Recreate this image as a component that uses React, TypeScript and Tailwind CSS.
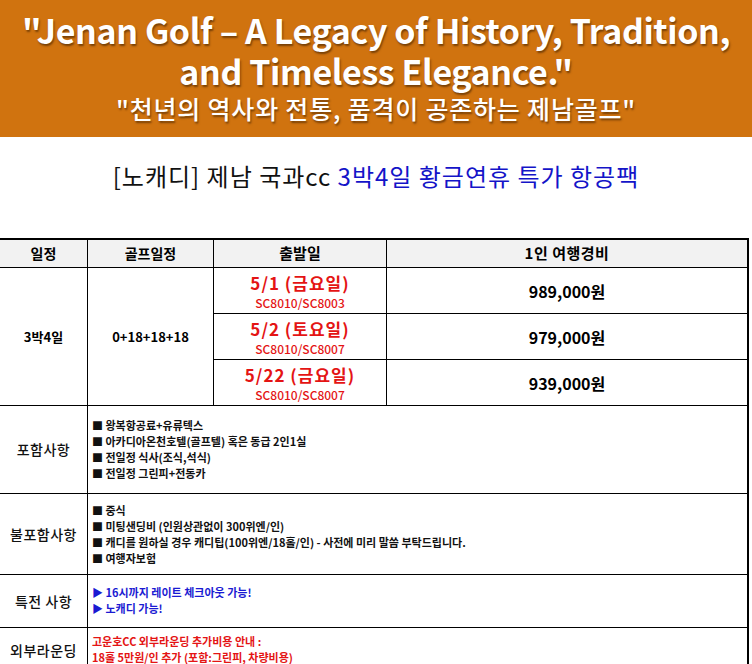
import React from 'react'

const KR = { fontFamily: '"Noto Sans CJK KR", "Noto Sans", sans-serif' }

const departures = [
  { date: '5/1 (금요일)', flight: 'SC8010/SC8003', price: '989,000원' },
  { date: '5/2 (토요일)', flight: 'SC8010/SC8007', price: '979,000원' },
  { date: '5/22 (금요일)', flight: 'SC8010/SC8007', price: '939,000원' },
]

const included = ['왕복항공료+유류텍스', '아카디아온천호텔(골프텔) 혹은 동급 2인1실', '전일정 식사(조식,석식)', '전일정 그린피+전동카']

const excluded = [
  '중식',
  '미팅샌딩비 (인원상관없이 300위엔/인)',
  '캐디를 원하실 경우 캐디팁(100위엔/18홀/인) - 사전에 미리 말씀 부탁드립니다.',
  '여행자보험',
]

const perks = ['16시까지 레이트 체크아웃 가능!', '노캐디 가능!']

function Label({ children }: { children: React.ReactNode }) {
  return (
    <div className="border-b border-r border-black flex items-center justify-center text-[14px] font-medium tracking-[0.5px] text-[#111]">
      {children}
    </div>
  )
}

export default function App() {
  return (
    <div className="w-[752px] h-[664px] overflow-hidden bg-white" style={KR}>
      {/* 배너 */}
      <div className="h-[137px] bg-[#d0730f] flex flex-col items-center text-white [text-shadow:1px_2px_2px_rgba(60,30,0,0.6)]">
        <div className="mt-[9px] text-[34px] leading-[41px] font-bold tracking-[-0.4px]">
          "Jenan Golf – A Legacy of History, Tradition,
        </div>
        <div className="text-[34px] leading-[41px] font-bold tracking-[-0.4px]">and Timeless Elegance."</div>
        <div className="text-[25px] leading-[34px] font-medium tracking-[0.8px]">"천년의 역사와 전통, 품격이 공존하는 제남골프"</div>
      </div>

      {/* 타이틀 */}
      <div className="h-[101px] pt-[22px] flex justify-center text-[24px] leading-[34px] tracking-[1px]">
        <span className="text-[#111]">[노캐디] 제남 국과cc&nbsp;</span>
        <span className="text-[#1414c8]">3박4일 황금연휴 특가 항공팩</span>
      </div>

      {/* 표 */}
      <div className="w-[749px] border-t-2 border-black grid grid-cols-[88px_126px_173px_362px] grid-rows-[28px_46px_46px_46px_88px_81px_53px_60px]">
        <div className="border-b border-r border-black bg-[#f2f2f2] flex items-center justify-center text-[14px] font-bold">일정</div>
        <div className="border-b border-r border-black bg-[#f2f2f2] flex items-center justify-center text-[14px] font-bold">골프일정</div>
        <div className="border-b border-r border-black bg-[#f2f2f2] flex items-center justify-center text-[15px] font-bold">출발일</div>
        <div className="border-b border-r-2 border-black bg-[#f2f2f2] flex items-center justify-center text-[15px] font-bold tracking-[0.5px]">1인 여행경비</div>

        <div className="row-span-3 border-b border-r border-black flex items-center justify-center text-[13px] font-bold">3박4일</div>
        <div className="row-span-3 border-b border-r border-black flex items-center justify-center text-[13px] font-bold">0+18+18+18</div>
        {departures.map((d, i) => (
          <React.Fragment key={i}>
            <div className="border-b border-r border-black flex flex-col items-center justify-center text-[#e41414] font-bold">
              <div className="text-[17px] leading-[23px] tracking-[1px]">{d.date}</div>
              <div className="text-[12px] leading-[17px] font-medium">{d.flight}</div>
            </div>
            <div className="border-b border-r-2 border-black flex items-center justify-center text-[16px] font-bold">{d.price}</div>
          </React.Fragment>
        ))}

        <Label>포함사항</Label>
        <div className="col-span-3 border-b border-r-2 border-black flex flex-col justify-center pl-[4px] pb-[2px] text-[11px] leading-[16px] font-bold text-[#111]">
          {included.map((t) => (
            <div key={t}>■ {t}</div>
          ))}
        </div>

        <Label>불포함사항</Label>
        <div className="col-span-3 border-b border-r-2 border-black flex flex-col justify-center pl-[4px] text-[11px] leading-[16px] font-bold text-[#111]">
          {excluded.map((t) => (
            <div key={t}>■ {t}</div>
          ))}
        </div>

        <Label>특전 사항</Label>
        <div className="col-span-3 border-b border-r-2 border-black flex flex-col justify-center pl-[4px] pb-[2px] text-[11px] leading-[16px] font-bold text-[#1a1ad2]">
          {perks.map((t) => (
            <div key={t}>▶ {t}</div>
          ))}
        </div>

        <div className="border-r border-black flex items-start justify-center pt-[12px] text-[14px] font-medium tracking-[0.5px] text-[#111]">외부라운딩</div>
        <div className="col-span-3 border-r-2 border-black pl-[4px] pt-[5px] text-[11px] leading-[16px] font-bold text-[#e41414]">
          <div>고운호CC 외부라운딩 추가비용 안내 :</div>
          <div>18홀 5만원/인 추가 (포함:그린피, 차량비용)</div>
        </div>
      </div>
    </div>
  )
}
